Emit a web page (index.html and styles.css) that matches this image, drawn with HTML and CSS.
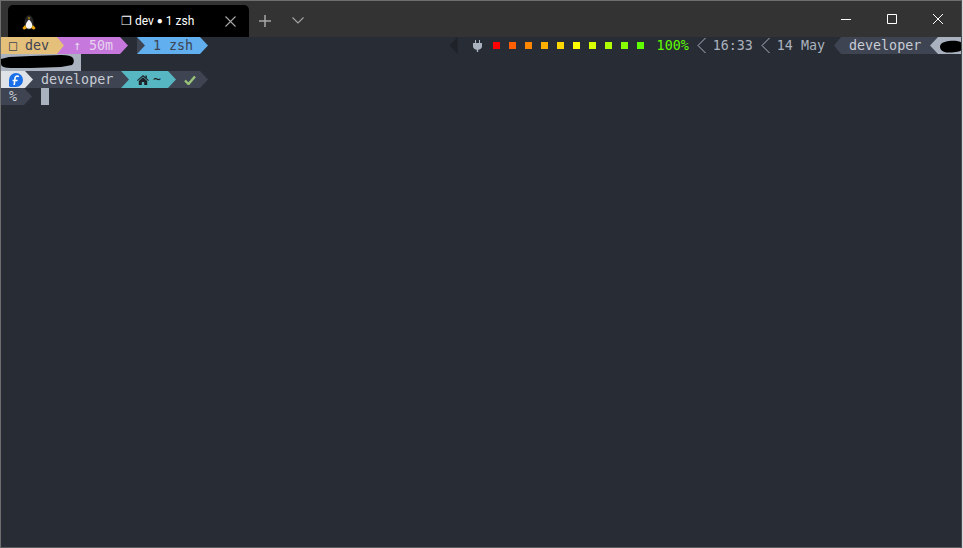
FILE: index.html
```html
<!DOCTYPE html>
<html lang="en">
<head>
<meta charset="utf-8">
<title>dev - zsh</title>
<link rel="stylesheet" href="styles.css">
</head>
<body>
<div class="window">
  <header class="titlebar">
    <div class="tab">
      <svg class="tux" viewBox="0 0 14 15" width="14" height="15"><ellipse cx="7" cy="7.500" rx="4.500" ry="7.200" fill="#262626"/><path d="M7 4.500C5.500 6 3.600 8.200 3.600 10.800 3.600 12.800 5.200 13.800 7 13.800s3.400-1 3.400-3C10.400 8.200 8.500 6 7 4.500z" fill="#f6f6f6"/><path d="M5.800 2.600h2.400L7 4.200z" fill="#e8a30c"/><path d="M.4 13L3 10l1.800 3.200L2 14.800zM13.600 13L11 10l-1.800 3.200L12 14.800z" fill="#eda90e"/></svg>
      <span class="tab-title">❐ dev <span class="tab-dot">●</span> 1 zsh</span>
      <svg class="tab-close" viewBox="0 0 11 11" width="11" height="11"><path d="M.5.5l10 10M10.500.5l-10 10" stroke="#a8a8a8" stroke-width="1.100" fill="none"/></svg>
    </div>
    <svg class="new-tab" viewBox="0 0 12 12" width="12" height="12"><path d="M6 0v12M0 6h12" stroke="#a6a6a6" stroke-width="1.500" fill="none"/></svg>
    <svg class="tab-menu" viewBox="0 0 12 7" width="12" height="7"><path d="M.5.5L6 6 11.500.5" stroke="#a6a6a6" stroke-width="1.100" fill="none"/></svg>
    <div class="controls">
      <svg viewBox="0 0 10 10" width="10" height="10"><path d="M0 5.500h10" stroke="#fff" fill="none"/></svg>
      <svg viewBox="0 0 10 10" width="10" height="10"><path d="M.5.500h9v9h-9z" stroke="#fff" fill="none"/></svg>
      <svg viewBox="0 0 10 10" width="10" height="10"><path d="M0 0l10 10M10 0L0 10" stroke="#fff" fill="none"/></svg>
    </div>
  </header>
  <main class="terminal">
    <div class="row status">
      <div class="side">
        <span class="seg yellow yellow-seg">□ dev</span><i class="arr f-yellow t-purple"></i>
        <span class="seg purple purple-seg">↑ 50m</span><i class="arr f-purple t-term"></i>
        <span class="gap"></span><i class="arr f-dark t-blue"></i>
        <span class="seg blue blue-seg">1 zsh</span><i class="arr f-blue t-term"></i>
      </div>
      <div class="side right">
        <i class="larr f-deep t-term"></i>
        <svg class="plug" viewBox="0 0 9 12" width="9" height="12"><path d="M2 0h1v3h3V0h1v3h2v3.500C9 8.500 7 9.500 5.200 9.700V12H3.800V9.700C2 9.500 0 8.500 0 6.500V3h2z" fill="#abb2bf"/></svg>
        <div class="battery">
          <i class="cell c1"></i><i class="cell c2"></i><i class="cell c3"></i><i class="cell c4"></i><i class="cell c5"></i><i class="cell c6"></i><i class="cell c7"></i><i class="cell c8"></i><i class="cell c9"></i><i class="cell c10"></i>
        </div>
        <span class="pct">100%</span>
        <svg class="thin" viewBox="0 0 9 17" width="9" height="17"><path d="M8.500 1L1 8.500 8.500 16" stroke="#abb2bf" fill="none"/></svg>
        <span class="plain">16:33</span>
        <svg class="thin" viewBox="0 0 9 17" width="9" height="17"><path d="M8.500 1L1 8.500 8.500 16" stroke="#abb2bf" fill="none"/></svg>
        <span class="plain">14 May</span>
        <i class="larr f-dark t-term host-arrow"></i>
        <span class="seg dark user-seg">developer</span>
        <i class="larr f-light t-dark"></i>
        <span class="seg light host-seg">
          <svg viewBox="0 0 23 17" width="23" height="17"><path d="M2 9.500C2 6.500 6 4.500 11 4c5-.5 11 0 12 1.500v8c-2 1.500-8 2-13 2-5 0-8-2.500-8-6z" fill="#000"/></svg>
        </span>
      </div>
    </div>
    <div class="row">
      <div class="redacted"><svg viewBox="0 0 80 17" width="80" height="17"><path d="M0 5L8 3 30 2 60 1Q70 1 72 4 74 8 71 11L60 13 30 14 10 14Q0 14 0 10z" fill="#000"/></svg></div>
    </div>
    <div class="row">
      <span class="seg white logo-seg">
        <svg viewBox="0 0 14 14" width="14" height="14"><path d="M7 0a7 7 0 0 1 0 14H1.500A1.500 1.500 0 0 1 0 12.500V7a7 7 0 0 1 7-7z" fill="#1a6fe8"/><path d="M5.200 12L6 5.500A2.200 2.200 0 0 1 9.800 3.800M3.600 7.500h5" stroke="#fff" stroke-width="1.600" fill="none"/></svg>
      </span><i class="arr f-white t-dark"></i>
      <span class="seg dark user-left">developer</span><i class="arr f-dark t-teal"></i>
      <span class="seg teal path-seg">
        <svg viewBox="0 0 12 10" width="12" height="10"><path d="M6 0L0 5.200l.7.700L6 1.400l5.300 4.500.7-.7L9.800 3.300V.6H8.400v1.500zM1.800 6v4h3V7h2.400v3h3V6L6 2.300z" fill="#1d2127"/></svg>
        <span class="tilde">~</span>
      </span><i class="arr f-teal t-dark"></i>
      <span class="seg dark check-seg">
        <svg viewBox="0 0 12 10" width="12" height="10"><path d="M1 5.500L4.500 9 11 1.500" stroke="#98c379" stroke-width="2.400" fill="none"/></svg>
      </span><i class="arr f-dark t-term"></i>
    </div>
    <div class="row">
      <span class="seg dark prompt">%</span><i class="arr f-dark t-term"></i>
      <span class="cursor"></span>
    </div>
  </main>
</div>
</body>
</html>
```
FILE: styles.css
```css
* { box-sizing: border-box; }
html, body { margin: 0; height: 100%; overflow: hidden; background: #d4d4d4; }

.window {
  width: 962px;
  height: 548px;
  display: flex;
  flex-direction: column;
  border: 1px solid #6e6e6e;
  border-right-color: #4a4d52;
  border-bottom-color: #5a5c60;
}

/* title bar */
.titlebar {
  height: 36px;
  flex: none;
  display: flex;
  align-items: flex-end;
  background: #333333;
  padding-left: 7px;
}
.tab {
  width: 241px;
  height: 32px;
  background: #000;
  border-radius: 5px 5px 0 0;
  display: flex;
  align-items: center;
  padding: 0 13px 0 14px;
  color: #fff;
}
.tux { flex: none; margin-top: 2px; }
.tab-title {
  margin-left: 85px;
  font: 12px/16px Roboto, "Open Sans", sans-serif;
  white-space: nowrap;
  flex: 1;
}
.tab-dot { font-size: 10px; vertical-align: 1px; }
.tab-close { flex: none; }
.new-tab { flex: none; margin: 0 0 10px 10px; }
.tab-menu { flex: none; margin: 0 0 13px 21px; }
.controls {
  margin-left: auto;
  align-self: stretch;
  display: flex;
  align-items: flex-start;
  gap: 36px;
  padding: 13px 18px 0 0;
}

/* terminal */
.terminal {
  flex: 1;
  background: #282c34;
  font: 13.33px/17px "DejaVu Sans Mono", monospace;
  color: #abb2bf;
}
.row {
  display: flex;
  height: 17px;
  white-space: nowrap;
}
.status { justify-content: space-between; }
.side { display: flex; align-items: stretch; height: 17px; }
.right { align-items: center; }

.seg { display: flex; align-items: center; height: 17px; flex: none; white-space: pre; }
.yellow { background: #e5c07b; color: #3e4452; }
.purple { background: #c678dd; color: #e6d3ee; }
.blue { background: #61afef; color: #3e4452; }
.teal { background: #56b6c2; }
.dark { background: #3e4452; color: #c8ccd4; }
.white { background: #dfe3e8; }
.light { background: #abb2bf; }

.yellow-seg { width: 56px; padding-left: 8px; }
.purple-seg { width: 56px; padding-left: 9px; }
.blue-seg { width: 55px; padding-left: 8px; }
.gap { width: 9px; }
.logo-seg { width: 24px; padding-left: 8px; }
.user-left { width: 88px; padding-left: 8px; }
.path-seg { width: 39px; padding-left: 8px; gap: 4px; }
.tilde { color: #1d2127; }
.check-seg { width: 24px; padding-left: 8px; }
.prompt { width: 23px; padding-left: 8px; }
.cursor { width: 8px; height: 17px; background: #abb2bf; margin-left: 9px; }

/* powerline separators */
.arr, .larr {
  display: block;
  flex: none;
  width: 8px;
  height: 17px;
  background: var(--to);
}
.arr::before, .larr::before {
  content: "";
  display: block;
  height: 100%;
  background: var(--from);
}
.arr::before { clip-path: polygon(0 0, 100% 50%, 0 100%); }
.larr::before { clip-path: polygon(100% 0, 0 50%, 100% 100%); }
.arr.f-yellow { width: 7px; }

.f-yellow { --from: #e5c07b; }
.f-purple { --from: #c678dd; }
.f-blue { --from: #61afef; }
.f-teal { --from: #56b6c2; }
.f-dark { --from: #3e4452; }
.f-white { --from: #dfe3e8; }
.f-light { --from: #abb2bf; }
.f-deep { --from: #1f2329; }
.t-purple { --to: #c678dd; }
.t-blue { --to: #61afef; }
.t-teal { --to: #56b6c2; }
.t-dark { --to: #3e4452; }
.t-term { --to: #282c34; }

/* right status */
.plug { margin-left: 15px; flex: none; }
.battery { display: flex; gap: 9px; margin-left: 11px; }
.cell { display: block; width: 7px; height: 7px; }
.c1 { background: #ff0000; }
.c2 { background: #ff5f00; }
.c3 { background: #ff8700; }
.c4 { background: #ffaf00; }
.c5 { background: #ffd700; }
.c6 { background: #ffff00; }
.c7 { background: #d7ff00; }
.c8 { background: #afff00; }
.c9 { background: #87ff00; }
.c10 { background: #5fff00; }
.pct { color: #5fff00; margin-left: 13px; }
.thin { flex: none; margin: 0 7px 0 8px; }
.plain { color: #abb2bf; }
.host-arrow { margin-left: 9px; width: 7px; }
.user-seg { width: 89px; padding-left: 8px; }
.host-seg { width: 23px; }

/* redaction marks */
.redacted { width: 80px; height: 17px; background: #abb2bf; }
.redacted svg, .host-seg svg { display: block; }
```
